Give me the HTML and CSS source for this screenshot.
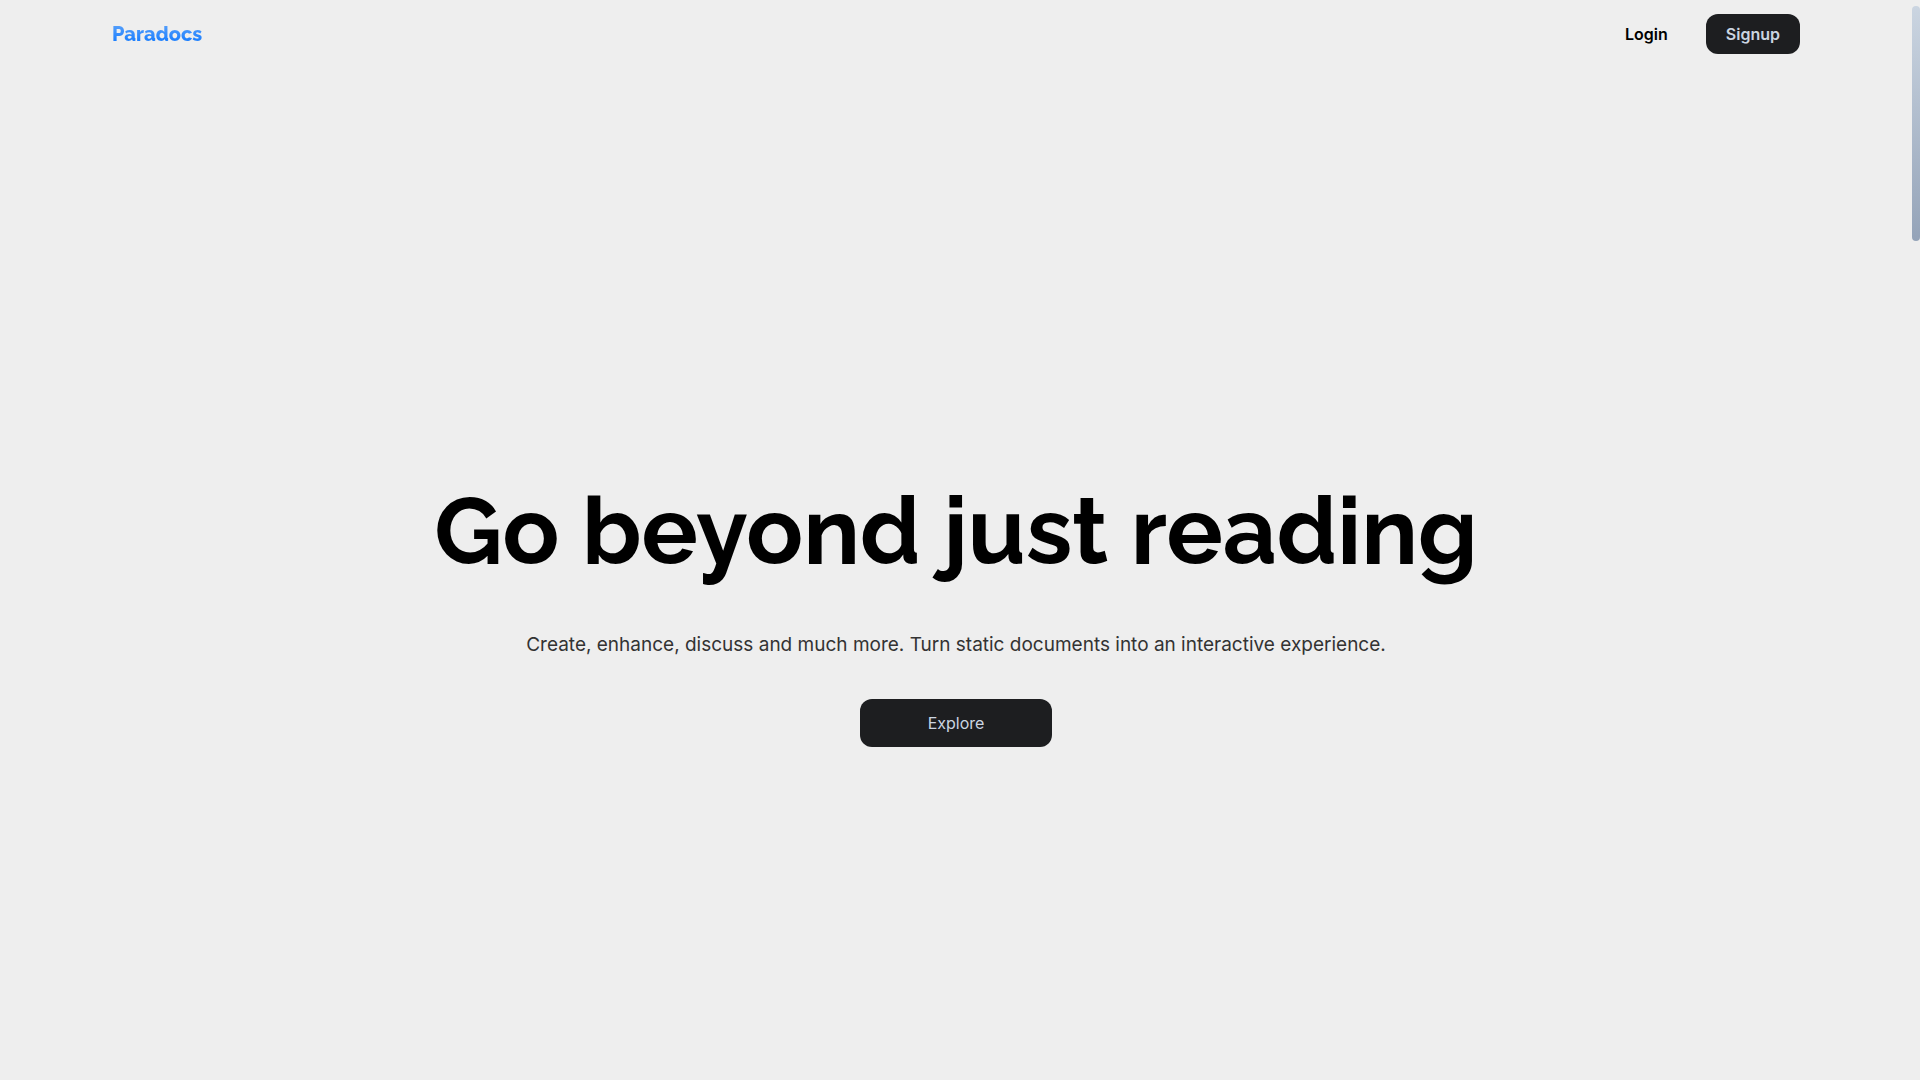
FILE: index.html
```
<!DOCTYPE html>
<html lang="en">
<head>
    <meta charset="UTF-8">
    <meta name="viewport" content="width=device-width, initial-scale=1.0">
    <title>Paradocs</title>
    <link rel="stylesheet" href="styles.css">
</head>
<body>
    <div class="page">
        <header class="navbar">
            <a class="logo" href="#">Paradocs</a>
            <nav class="nav-links">
                <a class="login" href="#">Login</a>
                <button class="btn btn-signup" type="button">Signup</button>
            </nav>
        </header>

        <main>
            <section class="hero">
                <h1>Go beyond just reading</h1>
                <p>Create, enhance, discuss and much more. Turn static documents into an interactive experience.</p>
                <button class="btn btn-explore" type="button">Explore</button>
            </section>
        </main>
    </div>

    <div class="scrollbar" aria-hidden="true">
        <div class="scrollbar-thumb"></div>
    </div>
</body>
</html>
```

FILE: styles.css
```
* {
    box-sizing: border-box;
}
body {
    display: flex;
    height: 100vh;
    margin: 0;
    font-family: Inter, sans-serif;
    font-size: 16px;
    line-height: 24px;
    color: #000;
    background-color: #eee;
}
.page {
    flex: 1;
    overflow-y: auto;
    scrollbar-width: none;
}
.scrollbar {
    width: 8px;
    padding: 6px 0;
}
.scrollbar-thumb {
    height: 22%;
    background: linear-gradient(#cbd5e1, #94a3b8);
    border-radius: 4px;
}
.navbar {
    position: sticky;
    top: 0;
    display: flex;
    align-items: center;
    justify-content: space-between;
    padding: 14px 112px;
    background-color: #eee;
}
.logo {
    font-family: Raleway, Lato, sans-serif;
    font-size: 20px;
    font-weight: 800;
    color: transparent;
    text-decoration: none;
    background: linear-gradient(#60a5fa, #0a75ff);
    -webkit-background-clip: text;
    background-clip: text;
}
.nav-links {
    display: flex;
    align-items: center;
    gap: 18px;
}
.login {
    padding: 8px 20px;
    font-weight: 600;
    color: #000;
    text-decoration: none;
}
.btn {
    border: none;
    border-radius: 12px;
    background-color: #1d1e20;
    color: #cbd5e1;
    font-family: inherit;
    font-size: 16px;
    line-height: 24px;
    cursor: pointer;
}
.btn:hover {
    background-color: #333;
}
.btn-signup {
    padding: 8px 20px;
    font-weight: 600;
}
.hero {
    display: flex;
    flex-direction: column;
    align-items: center;
    justify-content: center;
    min-height: 100vh;
    padding: 0 24px 10px;
    text-align: center;
}
.hero h1 {
    margin: 0;
    font-family: Raleway, Lato, sans-serif;
    font-size: 94px;
    font-weight: 700;
    line-height: 144px;
}
.hero p {
    margin: 28px 0 40px;
    font-size: 19px;
    line-height: 28px;
    color: #333;
}
.btn-explore {
    width: 192px;
    padding: 12px 20px;
}
```
